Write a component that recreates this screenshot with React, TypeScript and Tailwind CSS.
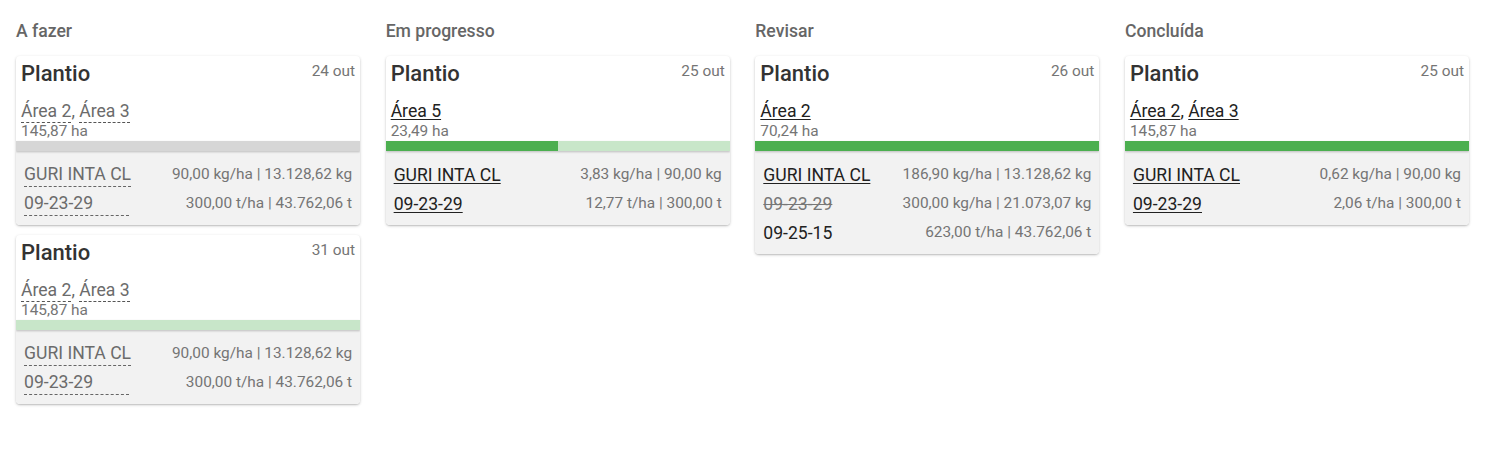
import React from "react";

type Row = { name: string; value: string; style: "dashed" | "link" | "strike" | "plain"; w?: string };
type Card = {
  date: string;
  areas: string[];
  areaStyle: "dashed" | "link";
  ha: string;
  bar: "gray" | "light" | "half" | "full";
  rows: Row[];
};

const columns: { title: string; cards: Card[] }[] = [
  {
    title: "A fazer",
    cards: [
      {
        date: "24 out",
        areas: ["Área 2", "Área 3"],
        areaStyle: "dashed",
        ha: "145,87 ha",
        bar: "gray",
        rows: [
          { name: "GURI INTA CL", value: "90,00 kg/ha | 13.128,62 kg", style: "dashed" },
          { name: "09-23-29", value: "300,00 t/ha | 43.762,06 t", style: "dashed", w: "w-[105px]" },
        ],
      },
      {
        date: "31 out",
        areas: ["Área 2", "Área 3"],
        areaStyle: "dashed",
        ha: "145,87 ha",
        bar: "light",
        rows: [
          { name: "GURI INTA CL", value: "90,00 kg/ha | 13.128,62 kg", style: "dashed" },
          { name: "09-23-29", value: "300,00 t/ha | 43.762,06 t", style: "dashed", w: "w-[105px]" },
        ],
      },
    ],
  },
  {
    title: "Em progresso",
    cards: [
      {
        date: "25 out",
        areas: ["Área 5"],
        areaStyle: "link",
        ha: "23,49 ha",
        bar: "half",
        rows: [
          { name: "GURI INTA CL", value: "3,83 kg/ha | 90,00 kg", style: "link" },
          { name: "09-23-29", value: "12,77 t/ha | 300,00 t", style: "link" },
        ],
      },
    ],
  },
  {
    title: "Revisar",
    cards: [
      {
        date: "26 out",
        areas: ["Área 2"],
        areaStyle: "link",
        ha: "70,24 ha",
        bar: "full",
        rows: [
          { name: "GURI INTA CL", value: "186,90 kg/ha | 13.128,62 kg", style: "link" },
          { name: "09-23-29", value: "300,00 kg/ha | 21.073,07 kg", style: "strike" },
          { name: "09-25-15", value: "623,00 t/ha | 43.762,06 t", style: "plain" },
        ],
      },
    ],
  },
  {
    title: "Concluída",
    cards: [
      {
        date: "25 out",
        areas: ["Área 2", "Área 3"],
        areaStyle: "link",
        ha: "145,87 ha",
        bar: "full",
        rows: [
          { name: "GURI INTA CL", value: "0,62 kg/ha | 90,00 kg", style: "link" },
          { name: "09-23-29", value: "2,06 t/ha | 300,00 t", style: "link" },
        ],
      },
    ],
  },
];

function Bar({ kind }: { kind: Card["bar"] }) {
  const base = "relative z-10 h-[10px] w-full flex shadow-[0_1px_2px_rgba(0,0,0,0.22)]";
  if (kind === "gray") return <div className={base + " bg-[#d6d6d6]"} />;
  if (kind === "light") return <div className={base + " bg-[#c8e6c9]"} />;
  if (kind === "full") return <div className={base + " bg-[#4caf50]"} />;
  return (
    <div className={base + " bg-[#c8e6c9]"}>
      <div className="h-full w-1/2 bg-[#4caf50]" />
    </div>
  );
}

function RowName({ row }: { row: Row }) {
  if (row.style === "dashed")
    return (
      <span className={"inline-block leading-[24px] text-[#6b6b6b] border-b border-dashed border-[#666] " + (row.w ?? "")}>
        {row.name}
      </span>
    );
  if (row.style === "link")
    return <span className="leading-[22px] text-[#212121] underline underline-offset-2 decoration-1">{row.name}</span>;
  if (row.style === "strike")
    return <span className="leading-[22px] text-[#777] line-through decoration-1">{row.name}</span>;
  return <span className="leading-[22px] text-[#212121]">{row.name}</span>;
}

function CardView({ card }: { card: Card }) {
  return (
    <div className="rounded-[4px] bg-white shadow-[0_1px_3px_rgba(0,0,0,0.22),0_1px_1px_rgba(0,0,0,0.08)] overflow-hidden">
      <div className="px-[5px] pt-1 pb-[2px]">
        <div className="flex items-start justify-between">
          <div className="text-[22px] leading-7 font-medium text-[#333]">Plantio</div>
          <div className="text-[15.4px] leading-5 pt-[1px] text-[#757575]">{card.date}</div>
        </div>
        <div className="mt-[11px] text-[17.6px] leading-6">
          {card.areas.map((a, i) => (
            <React.Fragment key={i}>
              {i > 0 && <span className={card.areaStyle === "dashed" ? "text-[#666]" : "text-[#212121]"}>, </span>}
              {card.areaStyle === "dashed" ? (
                <span className="inline-block leading-[22px] text-[#6b6b6b] border-b border-dashed border-[#555]">{a}</span>
              ) : (
                <span className="text-[#212121] underline underline-offset-2 decoration-1">{a}</span>
              )}
            </React.Fragment>
          ))}
        </div>
        <div className="text-[15.4px] leading-4 text-[#757575]">{card.ha}</div>
      </div>
      <Bar kind={card.bar} />
      <div className="bg-[#f2f2f2] px-2 pt-[9px] pb-[7px]">
        {card.rows.map((r, i) => (
          <div key={i} className="flex h-[29px] items-center justify-between text-[17.6px]">
            <RowName row={r} />
            <span className="text-[15.4px] text-[#757575]">{r.value}</span>
          </div>
        ))}
      </div>
    </div>
  );
}

export default function App() {
  return (
    <div className="min-h-[449px] bg-white px-4 pt-[19px] grid grid-cols-4 gap-x-[25.6px] items-start" style={{ fontFamily: "Roboto, 'Noto Sans', sans-serif" }}>
      {columns.map((col) => (
        <div key={col.title} className="flex flex-col">
          <div className="h-6 leading-6 text-[17.6px] font-medium text-[#666] mb-[13px]">{col.title}</div>
          <div className="flex flex-col gap-[10px]">
            {col.cards.map((c, i) => (
              <CardView key={i} card={c} />
            ))}
          </div>
        </div>
      ))}
    </div>
  );
}
